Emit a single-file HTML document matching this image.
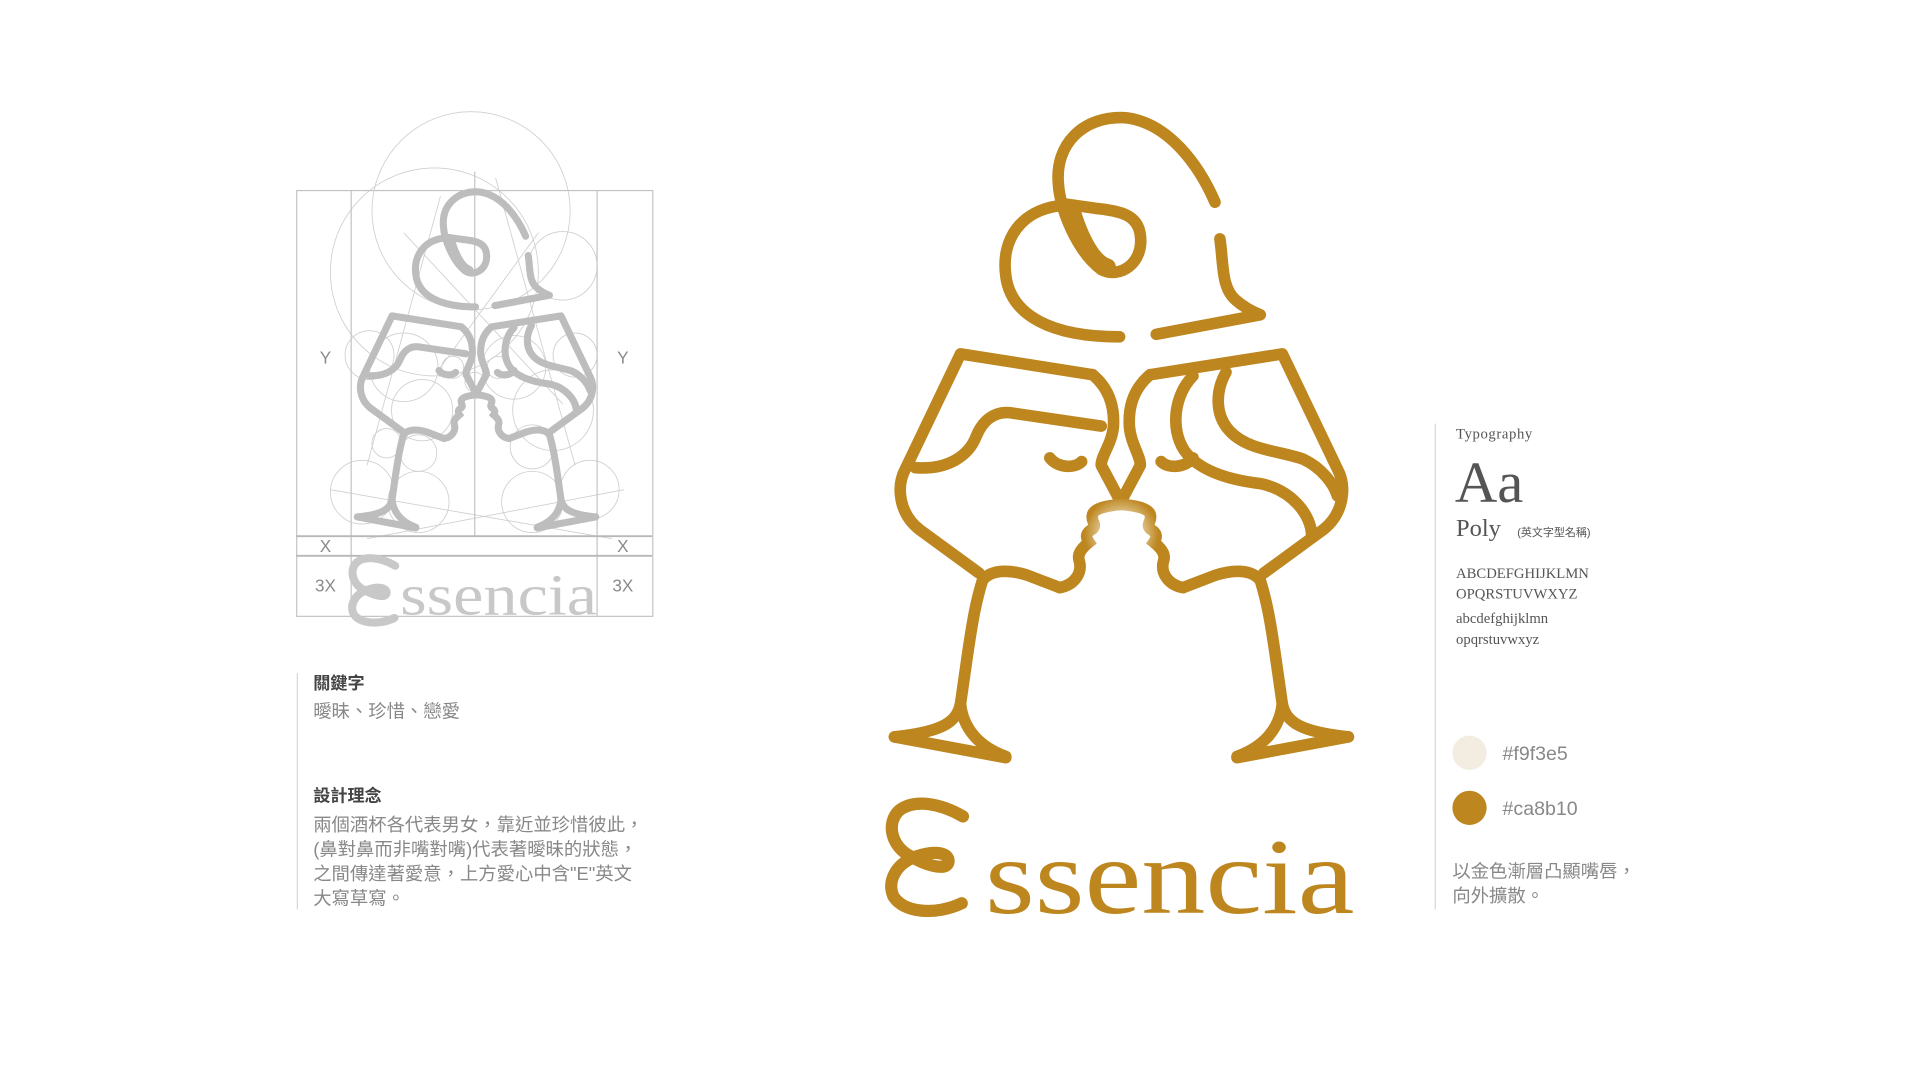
<!DOCTYPE html>
<html><head><meta charset="utf-8"><style>
html,body{margin:0;padding:0;background:#fff;}
svg{display:block}
.cj{font-family:"Liberation Sans","Noto Sans CJK TC",sans-serif;}
.sf{font-family:"Liberation Serif",serif;}
</style></head><body>
<svg width="1921" height="1081" viewBox="0 0 1570 883" xmlns="http://www.w3.org/2000/svg">
<defs>
<radialGradient id="lip" gradientUnits="userSpaceOnUse" cx="916" cy="436" r="30">
<stop offset="0" stop-color="#f1e4c8"/><stop offset="0.55" stop-color="#e0c690"/><stop offset="1" stop-color="#bd861f"/>
</radialGradient>
<g id="half" fill="none" stroke-linecap="round" stroke-linejoin="round">
<path d="M893,306 L785,289 L740,383 C732,398 735,420 752,433 L800,468"/>
<path d="M803,474 C798,490 795,505 790,540 L785,575 C782,590 770,598 731,602"/>
<path d="M785,575 C787,595 800,610 822,618"/>
<path d="M731,602 L822,619"/>
<path d="M858,374 C864,382 878,383 884,377"/>
<path d="M866,480 L840,470 C825,465 810,465 803,474"/>
</g>
<g id="logo" fill="none" stroke-linecap="round" stroke-linejoin="round">
<path d="M993,165 C980,135 955,100 920,96 C885,94 862,118 865,150 C866,170 880,205 900,220 C915,228 935,215 932,192 C930,175 915,172 895,170 L867,166"/>
<path d="M877,175 C885,200 895,215 905,218" stroke-width="14"/>
<path d="M865,168 C835,172 818,195 822,225 C826,258 860,275 915,275"/>
<path d="M997,195 C1000,215 998,235 1010,245 C1018,252 1025,255 1030,257 L945,273"/>
<use href="#half"/>
<use href="#half" transform="translate(1833,0) scale(-1,1)"/>
<path d="M900,348 L825,337 C812,336 803,344 798,356 C792,372 775,384 748,382"/>
<path d="M893,306 C905,316 911,330 910,348 C909,362 900,372 900,380 L916,410"/>
<path d="M940,306 C928,316 922,330 923,348 C924,362 932,372 932,380 L916,410"/>
<path d="M975,307 C960,322 956,350 968,368 C980,385 1005,392 1030,395 C1055,400 1072,420 1072,438"/>
<path d="M1002,304 C994,318 992,338 1005,352 C1020,368 1045,368 1065,375 C1080,382 1090,395 1093,405"/>
</g>
<path id="lips" d="M916,412 C905,413 895,415 893,420 C891,426 897,428 893,432 C886,436 888,440 890,443 C885,447 880,452 882,458 C885,468 878,478 866,480"/>
<path id="bigE" fill="none" stroke-linecap="round" d="M787,667 C770,657 748,652 735,662 C724,672 728,692 745,700 C755,706 772,712 775,705 C777,697 765,694 748,700 C732,706 725,720 730,732 C738,746 765,748 786,738"/>
</defs>

<g fill="none" stroke="#cfcfcf" stroke-width="0.7">
<circle cx="385" cy="172" r="81"/>
<circle cx="355" cy="222" r="85"/>
<circle cx="460" cy="217" r="28"/>
<circle cx="302" cy="290" r="20"/>
<circle cx="330" cy="300" r="28"/>
<circle cx="345" cy="335" r="25"/>
<circle cx="342" cy="370" r="15"/>
<circle cx="316" cy="362" r="12"/>
<circle cx="296" cy="402" r="26"/>
<circle cx="342" cy="410" r="25"/>
<circle cx="435" cy="410" r="25"/>
<circle cx="482" cy="400" r="24"/>
<circle cx="452" cy="335" r="33"/>
<circle cx="435" cy="365" r="18"/>
<circle cx="470" cy="290" r="18"/>
<circle cx="420" cy="300" r="26"/>
<circle cx="388" cy="312" r="8"/>
<circle cx="370" cy="300" r="9"/>
<circle cx="407" cy="300" r="9"/>
<path d="M300,380 L360,160 M470,380 L405,145 M330,190 L460,330 M440,190 L360,300 M270,400 L500,440 M510,400 L300,440"/>
</g>
<g fill="none" stroke="#c4c4c4" stroke-width="1">
<rect x="242.5" y="155.5" width="291" height="348"/>
<line x1="287" y1="155" x2="287" y2="503"/>
<line x1="488" y1="155" x2="488" y2="503"/>
<line x1="388" y1="140" x2="388" y2="438"/>
</g>
<line x1="242" y1="438" x2="533" y2="438" stroke="#b8b8b8" stroke-width="1.5"/>
<line x1="242" y1="454" x2="533" y2="454" stroke="#b8b8b8" stroke-width="1.5"/>
<g transform="translate(-91.7,106.2) scale(0.525)" stroke="#bdbdbd">
<use href="#logo" stroke-width="11"/>
<use href="#lips" fill="none" stroke-width="11" stroke-linecap="round"/>
<use href="#lips" fill="none" stroke-width="11" stroke-linecap="round" transform="translate(1833,0) scale(-1,1)"/>
</g>
<g fill="#8a8a8a" font-size="14" class="cj" text-anchor="middle">
<text x="266" y="297">Y</text><text x="509" y="297">Y</text>
<text x="266" y="451">X</text><text x="509" y="451">X</text>
<text x="266" y="483">3X</text><text x="509" y="483">3X</text>
</g>
<g transform="translate(287,455) scale(0.6) translate(-727,-655)">
<use href="#bigE" stroke="#c8c8c8" stroke-width="11"/>
</g>
<text x="327" y="502" class="sf" font-size="48" fill="#c8c8c8" textLength="161" lengthAdjust="spacingAndGlyphs">ssencia</text>

<line x1="243" y1="550" x2="243" y2="743" stroke="#d6d6d6" stroke-width="1"/>
<g class="cj">
<text x="256" y="563" font-size="14" font-weight="bold" fill="#444">關鍵字</text>
<text x="256" y="586" font-size="15" fill="#888">曖昧、珍惜、戀愛</text>
<text x="256" y="655" font-size="14" font-weight="bold" fill="#444">設計理念</text>
<text x="256" y="679" font-size="15" fill="#888">兩個酒杯各代表男女，靠近並珍惜彼此，</text>
<text x="256" y="699" font-size="15" fill="#888">(鼻對鼻而非嘴對嘴)代表著曖昧的狀態，</text>
<text x="256" y="719" font-size="15" fill="#888">之間傳達著愛意，上方愛心中含"E"英文</text>
<text x="256" y="739" font-size="15" fill="#888">大寫草寫。</text>
</g>

<use href="#logo" stroke="#bd861f" stroke-width="9.5"/>
<use href="#lips" fill="none" stroke="url(#lip)" stroke-width="9.5" stroke-linecap="round"/>
<use href="#lips" fill="none" stroke="url(#lip)" stroke-width="9.5" stroke-linecap="round" transform="translate(1833,0) scale(-1,1)"/>
<use href="#bigE" stroke="#bd861f" stroke-width="10"/>
<text x="805" y="746" class="sf" font-size="88" fill="#bd861f" textLength="302" lengthAdjust="spacingAndGlyphs">ssencia</text>

<line x1="1173" y1="346" x2="1173" y2="743" stroke="#d6d6d6" stroke-width="1"/>
<g class="sf" fill="#555">
<text x="1190" y="358" font-size="12" letter-spacing="0.5">Typography</text>
<text x="1189" y="410" font-size="48">Aa</text>
<text x="1190" y="438" font-size="20">Poly</text>
<text x="1240" y="438" font-size="9" class="cj">(英文字型名稱)</text>
<text x="1190" y="472" font-size="12">ABCDEFGHIJKLMN</text>
<text x="1190" y="489" font-size="12">OPQRSTUVWXYZ</text>
<text x="1190" y="509" font-size="12">abcdefghijklmn</text>
<text x="1190" y="526" font-size="12">opqrstuvwxyz</text>
</g>
<circle cx="1201" cy="615" r="14" fill="#f3ece0"/>
<circle cx="1201" cy="660" r="14" fill="#bd861f"/>
<g class="cj" fill="#888">
<text x="1228" y="621" font-size="16">#f9f3e5</text>
<text x="1228" y="666" font-size="16">#ca8b10</text>
<text x="1187" y="717" font-size="15">以金色漸層凸顯嘴唇，</text>
<text x="1187" y="737" font-size="15">向外擴散。</text>
</g>
</svg>
</body></html>
